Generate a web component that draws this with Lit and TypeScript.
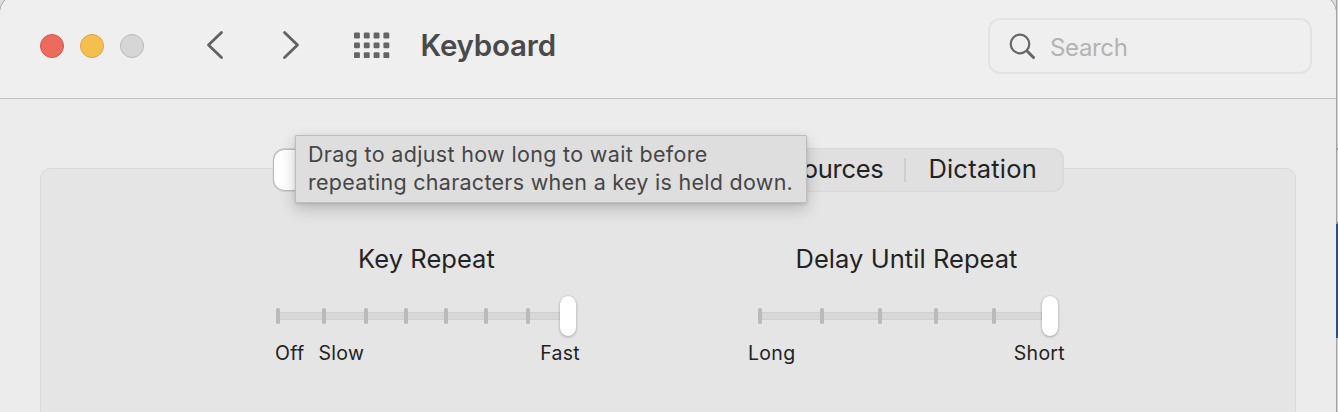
import { LitElement, html, svg, css } from "lit";
import { customElement, property } from "lit/decorators.js";

@customElement("tick-slider")
class TickSlider extends LitElement {
  @property({ attribute: false }) gaps: number[] = [];

  static styles = css`
    :host { display: block; }
    .slider { display: flex; align-items: center; height: 42px; }
    .rail {
      display: flex; align-items: center; flex: 1; height: 8px; border-radius: 4px 0 0 4px;
      background: #d8d8d8; box-shadow: inset 0 1px 0 #d0d0d0, inset 0 -1px 0 #d1d1d1;
    }
    .tick { flex: none; width: 4px; height: 16px; border-radius: 1.5px; background: #bababa; }
    .knob {
      flex: none; width: 16px; height: 40px; border-radius: 8px; background: #fff;
      box-shadow: 0 0 1px rgba(0,0,0,.25), 0 1px 3px rgba(0,0,0,.26);
    }
  `;

  render() {
    return html`<div class="slider">
      <div class="rail">
        ${this.gaps.map((g) => html`<i class="tick" style="margin-left:${g}px"></i>`)}
      </div>
      <div class="knob"></div>
    </div>`;
  }
}

@customElement("app-root")
class AppRoot extends LitElement {
  static styles = css`
    :host {
      display: block; height: 412px; overflow: hidden; position: relative;
      font-family: Inter, "Liberation Sans", sans-serif; color: #232323;
    }
    * { box-sizing: border-box; }
    .desk { display: flex; height: 412px; background: #dedede; }
    .window {
      width: 1336px; height: 440px; margin-top: -6px; border-radius: 20px 20px 0 0;
      background: #ececec; overflow: hidden; flex: none;
      box-shadow: 0 0 0 1px #a9a9a9;
    }
    .edge { width: 2px; display: flex; flex-direction: column; border-left: 1px solid #a2a2a2; }
    .e1 { height: 148px; background: #d2d2d2; }
    .e2 { height: 2px; background: #909090; }
    .e3 { height: 72px; background: #d2d2d2; }
    .e4 { height: 2px; background: #7d858c; }
    .e5 { height: 114px; background: #25537b; margin-left: -1px; position: relative; }
    .e6 { flex: 1; background: #d0d0d0; }
    .bar {
      display: flex; align-items: center; height: 105px; padding: 6px 24px 6px 40px;
      background: #efefef; border-bottom: 1px solid #c1c1c1;
    }
    .lights { display: flex; gap: 16px; }
    .light { width: 24px; height: 24px; border-radius: 50%; border: 1px solid; }
    .red { background: #ec6a5e; border-color: #d9554a; }
    .yellow { background: #f4bf4f; border-color: #dca43b; }
    .grey { background: #d6d6d6; border-color: #b9b9b9; }
    .icon { display: block; flex: none; }
    .back { margin-left: 60px; }
    .fwd { margin-left: 52px; }
    .grid { margin-left: 50px; }
    .title {
      margin: -3px 0 0 28.5px; font-size: 29.5px; line-height: 36px; font-weight: 600;
      color: #4a4a4a; letter-spacing: -0.2px; white-space: nowrap;
    }
    .search {
      margin-left: auto; width: 324px; height: 56px; border: 2px solid #e2e2e2;
      border-radius: 12px; display: flex; align-items: center; padding: 2px 0 0 18px;
      font-size: 24px; color: #b3b3b3; letter-spacing: -0.35px; gap: 12px;
    }
    .body { padding: 69px 40px 0; }
    .panel {
      height: 300px; border: 1px solid #dadada; border-radius: 10px; background: #e5e5e5;
      display: flex; flex-direction: column; align-items: flex-start;
    }
    .tabs {
      margin: -21px 0 0 232px; width: 791px; height: 44px; border-radius: 12px;
      background: #e0e0e0; box-shadow: inset 0 0 2px #c4c4c4;
      display: flex; align-items: center; padding: 0 27px 0 1px; font-size: 25.5px;
    }
    .selected {
      width: 160px; height: 40px; border-radius: 10px; background: #fff;
      box-shadow: 0 0 2px rgba(0,0,0,.55); margin-right: auto;
    }
    .tab { white-space: nowrap; margin-top: -4px; }
    .sources { letter-spacing: -0.3px; }
    .dictation { letter-spacing: 0.2px; }
    .rule { width: 2px; height: 24px; background: #cecece; margin: 0 22px 0 21px; }
    .controls { display: flex; padding-left: 234px; margin-top: 51px; }
    .group { width: 305px; }
    .group + .group { margin-left: 168px; width: 317px; }
    .heading {
      margin: 0; font-weight: 400; font-size: 25.5px; line-height: 32px; text-align: center;
      white-space: nowrap; letter-spacing: 0.05px;
    }
    .group:first-child .heading { padding-right: 2px; }
    .track { display: block; width: 300px; margin: 20px 0 0 1px; }
    .group + .group .track { margin-left: 10px; }
    .labels { display: flex; font-size: 19.5px; line-height: 24px; margin-top: 4px; letter-spacing: .3px; }
    .off { margin-right: 14px; }
    .end { margin-left: auto; }
    .tip {
      position: absolute; left: 295px; top: 135px; width: 512px; height: 68px;
      background: #dedede; border: 1px solid #bdbdbd; border-radius: 1px;
      box-shadow: 0 6px 16px rgba(0,0,0,.2), 0 1px 3px rgba(0,0,0,.12);
      padding: 4px 0 0 12px; font-size: 21.5px; line-height: 28px; color: #464646;
    }
    .line { white-space: nowrap; }
    .l1 { letter-spacing: .33px; }
    .l2 { letter-spacing: .28px; }
  `;

  render() {
    const rows = [0, 1, 2];
    const cols = [0, 1, 2, 3];
    return html`
      <div class="desk">
        <div class="window">
          <header class="bar">
            <div class="lights">
              <span class="light red"></span><span class="light yellow"></span><span class="light grey"></span>
            </div>
            <svg class="icon back" width="24" height="32" viewBox="0 0 24 32" fill="none" stroke="#626262" stroke-width="2.8" stroke-linecap="round" stroke-linejoin="round">
              <path d="M17.5 2.5L4.5 15L17.5 27.5" />
            </svg>
            <svg class="icon fwd" width="24" height="32" viewBox="0 0 24 32" fill="none" stroke="#626262" stroke-width="2.8" stroke-linecap="round" stroke-linejoin="round">
              <path d="M4.5 2.5L17.5 15L4.5 27.5" />
            </svg>
            <svg class="icon grid" width="38" height="28" viewBox="0 0 38 28" fill="#656565">
              ${rows.map((r) => cols.map((c) => svg`<rect x=${c * 9.8} y=${0.6 + r * 9.8} width="5.9" height="5.9" rx="1.2"></rect>`))}
            </svg>
            <h1 class="title">Keyboard</h1>
            <div class="search">
              <svg class="icon" width="30" height="30" viewBox="0 0 30 30" fill="none" stroke="#666" stroke-linecap="round">
                <circle cx="12" cy="12" r="9.3" stroke-width="2.2" />
                <path d="M19 19L25.5 25.5" stroke-width="3" />
              </svg>
              <span>Search</span>
            </div>
          </header>
          <main class="body">
            <section class="panel">
              <nav class="tabs">
                <span class="selected"></span>
                <span class="tab sources">ources</span>
                <i class="rule"></i>
                <span class="tab dictation">Dictation</span>
              </nav>
              <div class="controls">
                <div class="group">
                  <h2 class="heading">Key Repeat</h2>
                  <tick-slider class="track" .gaps=${[0, 42, 38, 36, 36, 36, 38]}></tick-slider>
                  <div class="labels"><span class="off">Off</span><span>Slow</span><span class="end">Fast</span></div>
                </div>
                <div class="group">
                  <h2 class="heading">Delay Until Repeat</h2>
                  <tick-slider class="track" .gaps=${[0, 58, 54, 52, 54]}></tick-slider>
                  <div class="labels"><span>Long</span><span class="end">Short</span></div>
                </div>
              </div>
            </section>
          </main>
        </div>
        <div class="edge">
          <i class="e1"></i><i class="e2"></i><i class="e3"></i><i class="e4"></i><i class="e5"></i><i class="e6"></i>
        </div>
      </div>
      <div class="tip" role="tooltip">
        <div class="line l1">Drag to adjust how long to wait before</div>
        <div class="line l2">repeating characters when a key is held down.</div>
      </div>
    `;
  }
}
